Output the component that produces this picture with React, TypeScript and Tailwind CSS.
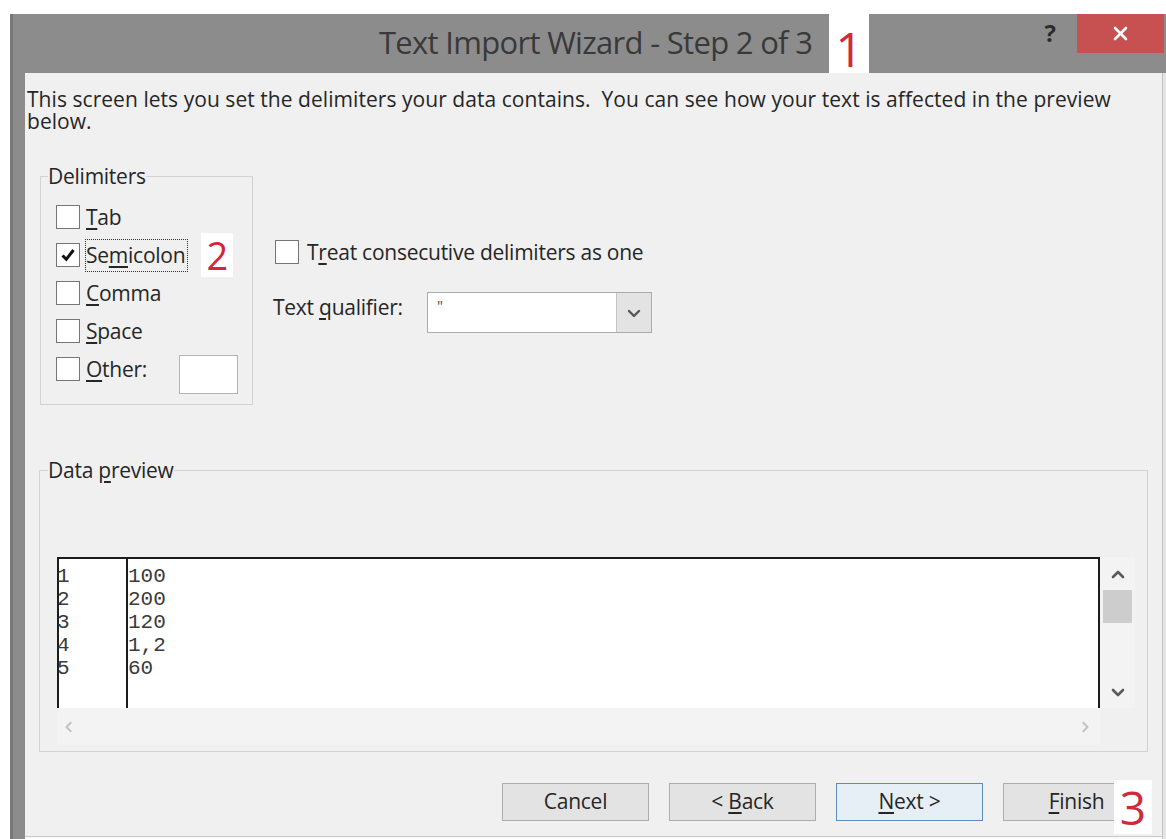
import React from "react";

type Dir = "up" | "down" | "left" | "right";

const chevronPaths: Record<Dir, string> = {
  up: "M2 9 L7 4 L12 9",
  down: "M2 5 L7 10 L12 5",
  left: "M9 2 L4 7 L9 12",
  right: "M5 2 L10 7 L5 12",
};

function Chevron({ dir, color, size = 14, stroke = 2.6 }: { dir: Dir; color: string; size?: number; stroke?: number }) {
  return (
    <svg width={size} height={size} viewBox="0 0 14 14" className="block">
      <path d={chevronPaths[dir]} fill="none" stroke={color} strokeWidth={stroke} strokeLinecap="round" strokeLinejoin="round" />
    </svg>
  );
}

// Access-key letter of a label
function U({ children }: { children: React.ReactNode }) {
  return <span className="underline underline-offset-[3px] decoration-[1.5px]">{children}</span>;
}

function CheckBox({ checked = false }: { checked?: boolean }) {
  return (
    <span className="w-[24px] h-[24px] shrink-0 border border-[#767676] bg-white flex items-center justify-center">
      {checked && (
        <svg width="18" height="18" viewBox="0 0 18 18" className="block">
          <path d="M3.5 9.5 L7.3 13.3 L14.5 4" fill="none" stroke="#111" strokeWidth="3" strokeLinejoin="miter" />
        </svg>
      )}
    </span>
  );
}

function Badge({ children, className }: { children: React.ReactNode; className: string }) {
  return (
    <span className={"bg-white flex items-center justify-center leading-none tracking-normal text-[#cf2a3a] " + className}>
      {children}
    </span>
  );
}

function Button({ children, primary = false }: { children: React.ReactNode; primary?: boolean }) {
  return (
    <div
      className={
        "w-[147px] h-[38px] flex items-center justify-center border " +
        (primary ? "border-[#5a8ebd] bg-[#e6eef6]" : "border-[#adadad] bg-[#e3e3e3]")
      }
    >
      {children}
    </div>
  );
}

const rows = [1, 2, 3, 4, 5];
const values = ["100", "200", "120", "1,2", "60"];
const intro =
  "This screen lets you set the delimiters your data contains.  You can see how your text is affected in the preview below.";

export default function App() {
  return (
    <div className="w-[1166px] h-[839px] bg-white pt-[14px] pl-[10px] overflow-hidden font-['Open_Sans',sans-serif] text-[21px] tracking-[-0.25px] text-[#262626]">
      <div className="w-[1156px] h-[825px] bg-[#8c8c8c] border-l-[3px] border-[#777777] flex flex-col">
        {/* title bar */}
        <div className="h-[59px] shrink-0 flex items-start">
          <div className="h-full flex items-center pb-[3px] pl-[366px] text-[31px] tracking-[-0.7px] text-[#393939]">
            Text Import Wizard - Step 2 of 3
          </div>
          <Badge className="ml-[17px] w-[40px] h-full pt-[10px] text-[48px]">1</Badge>
          <div className="flex-1" />
          <div className="w-[30px] h-[38px] flex items-center justify-center font-bold text-[24px] text-[#2c2c2c]">?</div>
          <div className="ml-[12px] mr-[2px] w-[87px] h-[39px] bg-[#c75050] flex items-center justify-center">
            <svg width="15" height="15" viewBox="0 0 15 15" className="block">
              <path d="M2 2 L13 13 M13 2 L2 13" stroke="#fff" strokeWidth="2.6" strokeLinecap="round" />
            </svg>
          </div>
        </div>

        <div className="flex flex-1 min-h-0">
          <div className="w-[12px]" />
          <div className="w-[1137px] bg-[#f0f0f0] flex flex-col">
            <p className="pt-[15px] pl-[2px] w-[1112px] leading-[22px] tracking-[0.05px] whitespace-pre-wrap">{intro}</p>

            {/* delimiter options */}
            <div className="flex items-start mt-[33px]">
              <fieldset className="ml-[15px] w-[213px] border border-[#d3d3d3] p-0 m-0">
                <legend className="ml-[7px] leading-[23px]">Delimiters</legend>
                <div className="pt-[17px] pb-[23px] pl-[15px] flex flex-col gap-[14px] leading-[23px]">
                  <div className="h-[24px] flex items-center gap-[6px]">
                    <CheckBox />
                    <span>
                      <U>T</U>ab
                    </span>
                  </div>
                  <div className="h-[24px] flex items-center">
                    <CheckBox checked />
                    <span className="ml-[5px] border border-dotted border-[#333] h-[33px] flex items-center pr-[2px]">
                      Se<U>m</U>icolon
                    </span>
                    <Badge className="ml-[13px] w-[32px] h-[44px] text-[38px]">2</Badge>
                  </div>
                  <div className="h-[24px] flex items-center gap-[6px]">
                    <CheckBox />
                    <span>
                      <U>C</U>omma
                    </span>
                  </div>
                  <div className="h-[24px] flex items-center gap-[6px]">
                    <CheckBox />
                    <span>
                      <U>S</U>pace
                    </span>
                  </div>
                  <div className="h-[24px] flex items-center gap-[6px]">
                    <CheckBox />
                    <span>
                      <U>O</U>ther:
                    </span>
                    <span className="ml-[26px] mt-[10px] w-[59px] h-[39px] shrink-0 bg-white border border-[#b4b4b4]" />
                  </div>
                </div>
              </fieldset>

              <div className="ml-[20px] mt-[75px] flex flex-col leading-[23px]">
                <div className="h-[24px] pl-[2px] flex items-center gap-[8px]">
                  <CheckBox />
                  <span>
                    T<U>r</U>eat consecutive delimiters as one
                  </span>
                </div>
                <div className="mt-[28px] h-[41px] flex items-start">
                  <span className="w-[154px] mt-[4px]">
                    Text <U>q</U>ualifier:
                  </span>
                  <div className="w-[225px] h-[41px] border border-[#ababab] bg-white flex">
                    <div className="flex-1 pl-[9px] pt-[5px] text-[15px] leading-none text-[#444]">"</div>
                    <div className="w-[35px] bg-[#e3e3e3] border-l border-[#c4c4c4] flex items-center justify-center">
                      <Chevron dir="down" color="#555" size={14} stroke={2.4} />
                    </div>
                  </div>
                </div>
              </div>
            </div>

            {/* preview of the parsed data */}
            <fieldset className="mt-[54px] ml-[14px] w-[1109px] border border-[#d3d3d3] p-0 m-0">
              <legend className="ml-[8px] leading-[23px]">
                Data <U>p</U>review
              </legend>
              <div className="pt-[75px] pl-[17px] pb-[6px]">
                <div className="w-[1078px] flex flex-col">
                  <div className="flex h-[151px]">
                    <div className="w-[1043px] bg-white border-t-2 border-l-2 border-r-2 border-[#1c1c1c] flex font-['Liberation_Mono',monospace] text-[21px] tracking-normal leading-[23px] text-[#3a3a3a]">
                      <div className="w-[68px] pt-[6px]">
                        <div className="-ml-[2px]">
                          {rows.map((r) => (
                            <div key={r}>{r}</div>
                          ))}
                        </div>
                      </div>
                      <div className="border-l-2 border-[#1c1c1c] pt-[6px] -ml-[1px]">
                        {values.map((v) => (
                          <div key={v}>{v}</div>
                        ))}
                      </div>
                    </div>
                    <div className="w-[35px] bg-[#f3f3f3] flex flex-col">
                      <div className="h-[33px] pt-[3px] flex items-center justify-center">
                        <Chevron dir="up" color="#5a5a5a" size={14} stroke={2.6} />
                      </div>
                      <div className="mx-[3px] h-[33px] bg-[#cdcdcd]" />
                      <div className="flex-1" />
                      <div className="h-[33px] flex items-center justify-center">
                        <Chevron dir="down" color="#5a5a5a" size={14} stroke={2.6} />
                      </div>
                    </div>
                  </div>
                  <div className="flex h-[37px]">
                    <div className="w-[1043px] bg-[#f3f3f3] flex items-center justify-between pl-[6px] pr-[9px]">
                      <Chevron dir="left" color="#c2c2c2" size={12} stroke={2.2} />
                      <Chevron dir="right" color="#c2c2c2" size={12} stroke={2.2} />
                    </div>
                    <div className="w-[35px] bg-[#f0f0f0]" />
                  </div>
                </div>
              </div>
            </fieldset>

            {/* dialog buttons */}
            <div className="mt-[31px] pr-[12px] flex justify-end gap-[20px]">
              <Button>Cancel</Button>
              <Button>
                &lt;{"\u00a0"}
                <U>B</U>ack
              </Button>
              <Button primary>
                <U>N</U>ext{"\u00a0"}&gt;
              </Button>
              <div className="relative">
                <Button>
                  <U>F</U>inish
                </Button>
                <Badge className="absolute -right-[2px] -top-[3px] w-[38px] h-[54px] text-[46px]">3</Badge>
              </div>
            </div>

            <div className="mt-auto h-[3px] border-t border-[#c9c9c9] bg-[#fafafa]" />
          </div>
          <div className="w-[4px] bg-[#e4e4e4] border-l border-[#c2c2c2]" />
        </div>
      </div>
    </div>
  );
}
